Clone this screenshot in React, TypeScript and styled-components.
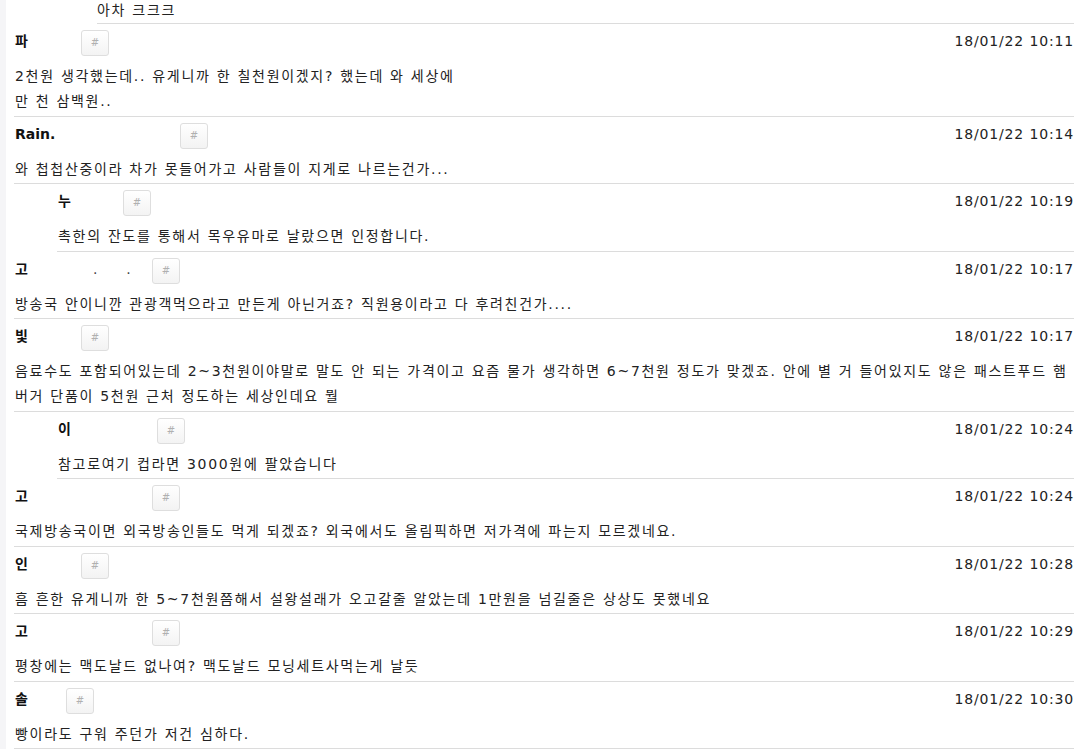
import React from "react";
import styled, { createGlobalStyle } from "styled-components";

const Global = createGlobalStyle`
  html, body { margin: 0; padding: 0; background: #fff; }
  body { font-family: "DejaVu Sans", "Noto Sans CJK KR", sans-serif; color: #222; }
`;

const Page = styled.div`
  border-left: 6px solid #f5f5f7;
  padding: 0 18px 0 8px;
  min-height: 749px;
  box-sizing: border-box;
  overflow: hidden;
`;

const List = styled.div`
  display: flex;
  flex-direction: column;
`;

const Item = styled.div<{ $depth: number }>`
  margin-left: ${(p) => p.$depth * 43}px;
  border-bottom: 1px solid #dcdcdc;
  padding: 6px 0 1.5px 1px;
`;

const Stub = styled.div<{ $depth: number }>`
  margin-left: ${(p) => 83 + (p.$depth - 2) * 43}px;
  border-bottom: 1px solid #dcdcdc;
  height: 23px;
  line-height: 20px;
  font-size: 14px;
  letter-spacing: 1.7px;
`;

const Header = styled.div`
  display: flex;
  align-items: flex-start;
  height: 27px;
`;

const Name = styled.div<{ $w: number }>`
  width: ${(p) => p.$w}px;
  flex: none;
  font-weight: bold;
  font-size: 14px;
  line-height: 22px;
  color: #111;
  white-space: nowrap;
`;

const Dot = styled.span<{ $gap: number }>`
  font-weight: normal;
  color: #444;
  margin-left: ${(p) => p.$gap}px;
`;

const HashButton = styled.button`
  flex: none;
  width: 28px;
  height: 26px;
  padding: 0;
  border: 1px solid #dedede;
  border-radius: 3px;
  background: linear-gradient(#ffffff, #f3f3f3);
  color: #b0b0b0;
  font-family: "DejaVu Sans", sans-serif;
  font-size: 10px;
  line-height: 24px;
  text-align: center;
`;

const Time = styled.div`
  margin-left: auto;
  font-size: 14px;
  letter-spacing: 0.85px;
  line-height: 22px;
  color: #222;
  white-space: nowrap;
`;

const Body = styled.div`
  margin-top: 7px;
  font-size: 14px;
  letter-spacing: 1.7px;
  line-height: 25px;
  color: #222;
`;

const Line = styled.div`
  white-space: nowrap;
`;

type Entry = {
  depth: number;
  name: string;
  nameW: number;
  dots?: number[];
  time: string;
  lines: string[];
};

const entries: Entry[] = [
  {
    depth: 0,
    name: "파",
    nameW: 66,
    time: "18/01/22 10:11",
    lines: ["2천원 생각했는데.. 유게니까 한 칠천원이겠지? 했는데 와 세상에", "만 천 삼백원.."],
  },
  {
    depth: 0,
    name: "Rain.",
    nameW: 165,
    time: "18/01/22 10:14",
    lines: ["와 첩첩산중이라 차가 못들어가고 사람들이 지게로 나르는건가..."],
  },
  {
    depth: 1,
    name: "누",
    nameW: 65,
    time: "18/01/22 10:19",
    lines: ["촉한의 잔도를 통해서 목우유마로 날랐으면 인정합니다."],
  },
  {
    depth: 0,
    name: "고",
    nameW: 137,
    dots: [65, 29],
    time: "18/01/22 10:17",
    lines: ["방송국 안이니깐 관광객먹으라고 만든게 아닌거죠? 직원용이라고 다 후려친건가...."],
  },
  {
    depth: 0,
    name: "빛",
    nameW: 66,
    time: "18/01/22 10:17",
    lines: [
      "음료수도 포함되어있는데 2~3천원이야말로 말도 안 되는 가격이고 요즘 물가 생각하면 6~7천원 정도가 맞겠죠. 안에 별 거 들어있지도 않은 패스트푸드 햄",
      "버거 단품이 5천원 근처 정도하는 세상인데요 뭘",
    ],
  },
  {
    depth: 1,
    name: "이",
    nameW: 99,
    time: "18/01/22 10:24",
    lines: ["참고로여기 컵라면 3000원에 팔았습니다"],
  },
  {
    depth: 0,
    name: "고",
    nameW: 137,
    time: "18/01/22 10:24",
    lines: ["국제방송국이면 외국방송인들도 먹게 되겠죠? 외국에서도 올림픽하면 저가격에 파는지 모르겠네요."],
  },
  {
    depth: 0,
    name: "인",
    nameW: 66,
    time: "18/01/22 10:28",
    lines: ["흠 흔한 유게니까 한 5~7천원쯤해서 설왕설래가 오고갈줄 알았는데 1만원을 넘길줄은 상상도 못했네요"],
  },
  {
    depth: 0,
    name: "고",
    nameW: 137,
    time: "18/01/22 10:29",
    lines: ["평창에는 맥도날드 없나여? 맥도날드 모닝세트사먹는게 날듯"],
  },
  {
    depth: 0,
    name: "솔",
    nameW: 51,
    time: "18/01/22 10:30",
    lines: ["빵이라도 구워 주던가 저건 심하다."],
  },
];

function Comment({ e }: { e: Entry }) {
  return (
    <Item $depth={e.depth}>
      <Header>
        <Name $w={e.nameW}>
          {e.name}
          {e.dots?.map((g, i) => (
            <Dot key={i} $gap={g}>.</Dot>
          ))}
        </Name>
        <HashButton type="button">#</HashButton>
        <Time>{e.time}</Time>
      </Header>
      <Body>
        {e.lines.map((l, i) => (
          <Line key={i}>{l}</Line>
        ))}
      </Body>
    </Item>
  );
}

export default function App() {
  return (
    <>
      <Global />
      <Page>
        <List>
          <Stub $depth={2}>아차 크크크</Stub>
          {entries.map((e, i) => (
            <Comment key={i} e={e} />
          ))}
        </List>
      </Page>
    </>
  );
}
